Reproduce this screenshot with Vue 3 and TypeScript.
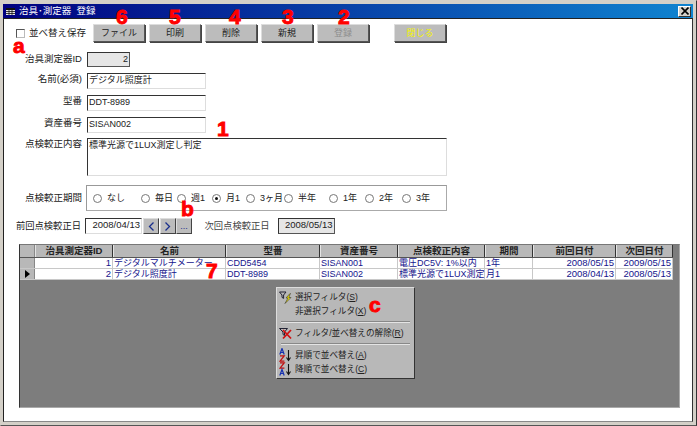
<template>
  <div class="window">
    <div class="titlebar">
      <svg class="title-icon" width="9" height="7" viewBox="0 0 9 7">
        <rect x="0" y="0" width="9" height="7" fill="#e8e8e8" />
        <rect x="0" y="0" width="9" height="2" fill="#111" />
        <path d="M0 3.5h9M0 5.5h9M3 2v5M6 2v5" stroke="#111" stroke-width="0.8" />
      </svg>
      <span class="title-text">治具･測定器&nbsp; 登録</span>
      <span class="close-btn">
        <svg width="8" height="8" viewBox="0 0 8 8"><path d="M0.5 0.5l7 7M7.5 0.5l-7 7" stroke="#000" stroke-width="1.6" /></svg>
      </span>
    </div>

    <div class="content">
      <div class="toolbar">
        <span class="checkbox"></span>
        <span class="check-label">並べ替え保存</span>
        <button v-for="b in buttons" :key="b.text" class="btn" :class="b.cls">{{ b.text }}</button>
      </div>

      <div class="row row-id">
        <label class="lbl">治具測定器ID</label>
        <span class="field readonly id-field">2</span>
      </div>
      <div class="row row-name">
        <label class="lbl">名前(必須)</label>
        <span class="field wide">デジタル照度計</span>
      </div>
      <div class="row row-model">
        <label class="lbl">型番</label>
        <span class="field wide">DDT-8989</span>
      </div>
      <div class="row row-asset">
        <label class="lbl">資産番号</label>
        <span class="field wide">SISAN002</span>
      </div>
      <div class="row row-content">
        <label class="lbl">点検較正内容</label>
        <span class="field memo">標準光源で1LUX測定し判定</span>
      </div>
      <div class="row row-period">
        <label class="lbl">点検較正期間</label>
        <div class="radio-group">
          <span v-for="o in periods" :key="o.text" class="radio-opt" :style="{ width: o.w + 'px' }">
            <span class="radio" :class="{ on: o.on }"></span>{{ o.text }}
          </span>
        </div>
      </div>
      <div class="row row-date">
        <label class="date-lbl">前回点検較正日</label>
        <span class="field date">2008/04/13</span>
        <span class="nav-btn">
          <svg width="7" height="9" viewBox="0 0 7 9"><path d="M5.5 0.5L1.5 4.5l4 4" fill="none" stroke="#1a2f8c" stroke-width="1.3" /></svg>
        </span>
        <span class="nav-btn">
          <svg width="7" height="9" viewBox="0 0 7 9"><path d="M1.5 0.5l4 4-4 4" fill="none" stroke="#1a2f8c" stroke-width="1.3" /></svg>
        </span>
        <span class="nav-btn dots">...</span>
        <label class="next-lbl">次回点検較正日</label>
        <span class="field date readonly next-date">2008/05/13</span>
      </div>

      <div class="datasheet">
        <div class="ds-row ds-head">
          <span class="sel"></span>
          <span v-for="c in columns" :key="c.title" class="cell" :style="{ width: c.w + 'px' }">{{ c.title }}</span>
        </div>
        <div v-for="(r, i) in rows" :key="i" class="ds-row ds-data">
          <span class="sel"><i v-if="i === 1" class="pointer"></i></span>
          <span
            v-for="(c, j) in columns"
            :key="c.title"
            class="cell"
            :class="{ right: c.right }"
            :style="{ width: c.w + 'px' }"
          >{{ r[j] }}</span>
        </div>

        <div class="menu">
          <div class="menu-item">
            <svg class="mi" width="13" height="13" viewBox="0 0 13 13">
              <path d="M0.5 1h6.5L4.6 4v3.4L3 6.4V4z" fill="none" stroke="#223" />
              <path d="M11 2.5L7 7h2L6 12.5 12 6.5H9.8l1.6-4z" fill="#f2e600" stroke="#333" stroke-width="0.6" />
            </svg>
            <span>選択フィルタ(<u>S</u>)</span>
          </div>
          <div class="menu-item"><span class="mi"></span><span>非選択フィルタ(<u>X</u>)</span></div>
          <div class="menu-sep"></div>
          <div class="menu-item">
            <svg class="mi" width="13" height="13" viewBox="0 0 13 13">
              <path d="M0.5 1.5h8L5.5 5v3.5L4 7.5V5z" fill="none" stroke="#223" />
              <path d="M4 3l8 8.5M12 3l-8 8.5" stroke="#d01010" stroke-width="1.8" />
            </svg>
            <span>フィルタ/並べ替えの解除(<u>R</u>)</span>
          </div>
          <div class="menu-sep"></div>
          <div class="menu-item">
            <svg class="mi" width="13" height="14" viewBox="0 0 13 14">
              <path d="M0.8 6.5L3 0.5l2.2 6M1.6 4.5h2.8" fill="none" stroke="#1530b0" stroke-width="1.2" />
              <path d="M1 7.8h4.2L1 13.2h4.4" fill="none" stroke="#c01010" stroke-width="1.3" />
              <path d="M9.5 2v10M7.5 9.5l2 3 2-3" fill="none" stroke="#111" stroke-width="1.1" />
            </svg>
            <span>昇順で並べ替え(<u>A</u>)</span>
          </div>
          <div class="menu-item">
            <svg class="mi" width="13" height="14" viewBox="0 0 13 14">
              <path d="M1 0.8h4.2L1 6.2h4.4" fill="none" stroke="#c01010" stroke-width="1.3" />
              <path d="M0.8 13.5L3 7.5l2.2 6M1.6 11.5h2.8" fill="none" stroke="#1530b0" stroke-width="1.2" />
              <path d="M9.5 2v10M7.5 9.5l2 3 2-3" fill="none" stroke="#111" stroke-width="1.1" />
            </svg>
            <span>降順で並べ替え(<u>C</u>)</span>
          </div>
        </div>
      </div>
    </div>

    <span v-for="m in marks" :key="m.t" class="mark" :style="{ left: m.x + 'px', top: m.y + 'px' }">{{ m.t }}</span>
  </div>
</template>

<script setup lang="ts">
const buttons = [
  { text: 'ファイル', cls: '' },
  { text: '印刷', cls: '' },
  { text: '削除', cls: '' },
  { text: '新規', cls: '' },
  { text: '登録', cls: 'disabled' },
  { text: '閉じる', cls: 'close' },
]

const periods = [
  { text: 'なし', w: 48 },
  { text: '毎日', w: 36 },
  { text: '週1', w: 35 },
  { text: '月1', w: 34, on: true },
  { text: '3ヶ月', w: 38 },
  { text: '半年', w: 45 },
  { text: '1年', w: 36 },
  { text: '2年', w: 37 },
  { text: '3年', w: 40 },
]

const columns = [
  { title: '治具測定器ID', w: 78, right: true },
  { title: '名前', w: 113 },
  { title: '型番', w: 94 },
  { title: '資産番号', w: 78 },
  { title: '点検較正内容', w: 87 },
  { title: '期間', w: 48 },
  { title: '前回日付', w: 83, right: true },
  { title: '次回日付', w: 57, right: true },
]

const rows = [
  ['1', 'デジタルマルチメーター', 'CDD5454', 'SISAN001', '電圧DC5V: 1%以内', '1年', '2008/05/15', '2009/05/15'],
  ['2', 'デジタル照度計', 'DDT-8989', 'SISAN002', '標準光源で1LUX測定', '月1', '2008/04/13', '2008/05/13'],
]

// red callouts drawn over the screenshot
const marks = [
  { t: '6', x: 115, y: 4 },
  { t: '5', x: 168, y: 4 },
  { t: '4', x: 228, y: 4 },
  { t: '3', x: 281, y: 4 },
  { t: '2', x: 337, y: 4 },
  { t: '1', x: 216, y: 116 },
  { t: 'a', x: 12, y: 33 },
  { t: 'b', x: 180, y: 196 },
  { t: 'c', x: 368, y: 292 },
  { t: '7', x: 205, y: 258 },
]
</script>

<style scoped>
.window {
  position: relative;
  width: 697px;
  height: 426px;
  box-sizing: border-box;
  padding: 3px 3px 3px 2px;
  background: #d4d0c8;
  border-top: 1px solid #d4d0c8;
  border-left: 1px solid #d4d0c8;
  border-right: 1px solid #333;
  border-bottom: 1px solid #555;
  display: flex;
  flex-direction: column;
  font-family: 'Liberation Sans', 'Noto Sans CJK JP', sans-serif;
  font-size: 9.5px;
  line-height: 12px;
  color: #222;
  overflow: hidden;
}

.titlebar {
  height: 14px;
  flex: none;
  display: flex;
  align-items: center;
  padding: 0 2px 0 3px;
  background: linear-gradient(90deg, #000080 0%, #1084d0 100%);
  color: #fff;
}

.title-icon {
  margin-right: 4px;
  flex: none;
}

.title-text {
  font-size: 9.5px;
}

.close-btn {
  margin-left: auto;
  width: 13px;
  height: 11px;
  background: #d4d0c8;
  border: 1px solid;
  border-color: #fff #333 #333 #fff;
  box-sizing: border-box;
  display: flex;
  align-items: center;
  justify-content: center;
}

.content {
  flex: 1;
  background: #fff;
  border: 1px solid #222;
  border-right-color: #333;
  border-bottom-color: #888;
  padding: 5px 0 0 12px;
  display: flex;
  flex-direction: column;
  min-height: 0;
}

.toolbar {
  height: 18px;
  display: flex;
  align-items: center;
}

.checkbox {
  width: 9px;
  height: 9px;
  border: 1px solid #555;
  border-right-color: #bbb;
  border-bottom-color: #bbb;
  box-sizing: border-box;
  margin-right: 4px;
}

.check-label {
  width: 64px;
  white-space: nowrap;
}

.btn {
  width: 52px;
  height: 18px;
  margin-right: 4px;
  padding: 0;
  background: #bcbcbc;
  border: 1px solid;
  border-color: #ddd #555 #555 #ddd;
  box-shadow: 1px 1px 0 #444;
  font: inherit;
  font-size: 9px;
  color: #222;
}

.btn.disabled {
  color: #8e8e8e;
  margin-right: 25px;
}

.btn.close {
  color: #f4f400;
}

.row {
  display: flex;
}

.lbl {
  width: 66px;
  flex: none;
  text-align: right;
  margin-right: 5px;
  white-space: nowrap;
}

.field {
  box-sizing: border-box;
  border: 1px solid #ddd;
  border-top-color: #333;
  border-left-color: #333;
  padding: 0 1px;
  white-space: nowrap;
  background: #fff;
  font-size: 9px;
}

.readonly {
  background: #e6e6e6;
  border-right-color: #555;
  border-bottom-color: #555;
}

.row-id {
  margin-top: 10px;
  height: 15px;
}

.row-id .lbl {
  padding-top: 1px;
}

.id-field {
  width: 43px;
  height: 15px;
  text-align: right;
}

.wide {
  width: 119px;
  height: 16px;
}

.row-name,
.row-model,
.row-asset {
  margin-top: 6px;
}

.row-content {
  margin-top: 5px;
}

.memo {
  width: 360px;
  height: 38px;
}

.row-period {
  margin-top: 9px;
  align-items: center;
}

.radio-group {
  box-sizing: border-box;
  width: 361px;
  height: 26px;
  margin-left: -1px;
  padding-left: 6px;
  display: flex;
  align-items: center;
  border: 1px solid #aaa;
  border-top-color: #999;
  border-left-color: #999;
  font-size: 9px;
}

.radio-opt {
  display: flex;
  align-items: center;
  white-space: nowrap;
  flex: none;
}

.radio {
  width: 9px;
  height: 9px;
  margin-right: 5px;
  border: 1px solid #777;
  border-radius: 50%;
  box-sizing: border-box;
  position: relative;
  flex: none;
}

.radio.on::after {
  content: '';
  position: absolute;
  left: 2px;
  top: 2px;
  width: 3px;
  height: 3px;
  border-radius: 50%;
  background: #111;
}

.row-date {
  margin-top: 7px;
  height: 16px;
  align-items: center;
}

.date-lbl {
  width: 67px;
  margin-left: -2px;
  margin-right: 4px;
  white-space: nowrap;
  font-size: 9.3px;
  text-align: right;
}

.date {
  width: 57px;
  height: 16px;
  margin-right: 1px;
  font-size: 9.5px;
  text-align: right;
}

.nav-btn {
  width: 16px;
  height: 16px;
  box-sizing: border-box;
  margin-right: 0.5px;
  background: #bcbcbc;
  border: 1px solid;
  border-color: #ddd #444 #444 #ddd;
  display: flex;
  align-items: center;
  justify-content: center;
}

.dots {
  color: #1a2f8c;
  font-size: 9px;
}

.next-lbl {
  margin-left: 12px;
  width: 73px;
  white-space: nowrap;
  font-size: 9.3px;
  color: #444;
}

.datasheet {
  position: relative;
  margin-top: 10px;
  margin-left: 3px;
  width: 661px;
  height: 164px;
  box-sizing: border-box;
  background: #7d7d7d;
  border: 1px solid;
  border-color: #777 #aaa #aaa #333;
}

.ds-row {
  display: flex;
  width: 653px;
}

.ds-head {
  height: 12px;
  line-height: 12px;
  background: #b8b8b8;
  font-weight: bold;
  text-align: center;
  border-bottom: 1px solid #555;
}

.ds-data {
  height: 11px;
  line-height: 10px;
  background: #fff;
  color: #14148c;
  font-size: 9px;
  border-bottom: 1px solid #c8c8c8;
  box-sizing: border-box;
}

.sel {
  width: 15px;
  flex: none;
  background: #b8b8b8;
  border-right: 1px solid #888;
  box-sizing: border-box;
  display: flex;
  align-items: center;
  justify-content: center;
}

.pointer {
  width: 0;
  height: 0;
  border-left: 5px solid #000;
  border-top: 4px solid transparent;
  border-bottom: 4px solid transparent;
}

.cell {
  box-sizing: border-box;
  flex: none;
  padding: 0 1px;
  white-space: nowrap;
  border-right: 1px solid #c8c8c8;
}

.ds-head .cell {
  border-right-color: #333;
  border-left: 1px solid #e4e4e4;
}

.right {
  text-align: right;
  font-size: 9.5px;
}

.menu {
  position: absolute;
  left: 256px;
  top: 42px;
  width: 139px;
  height: 92px;
  box-sizing: border-box;
  padding: 2px;
  background: #b8b8b8;
  border: 1px solid;
  border-color: #ddd #333 #333 #ddd;
  font-size: 8.6px;
  color: #222;
}

.menu-item {
  height: 14px;
  display: flex;
  align-items: center;
  white-space: nowrap;
}

.mi {
  width: 13px;
  flex: none;
  margin-right: 3px;
}

.menu-sep {
  height: 2px;
  margin: 3px 2px;
  border-top: 1px solid #888;
  border-bottom: 1px solid #e4e4e4;
  box-sizing: border-box;
}

.mark {
  position: absolute;
  font-family: 'Liberation Sans', sans-serif;
  font-weight: bold;
  font-size: 21px;
  line-height: 24px;
  color: #f00;
  -webkit-text-stroke: 0.9px #f00;
  pointer-events: none;
}
</style>
